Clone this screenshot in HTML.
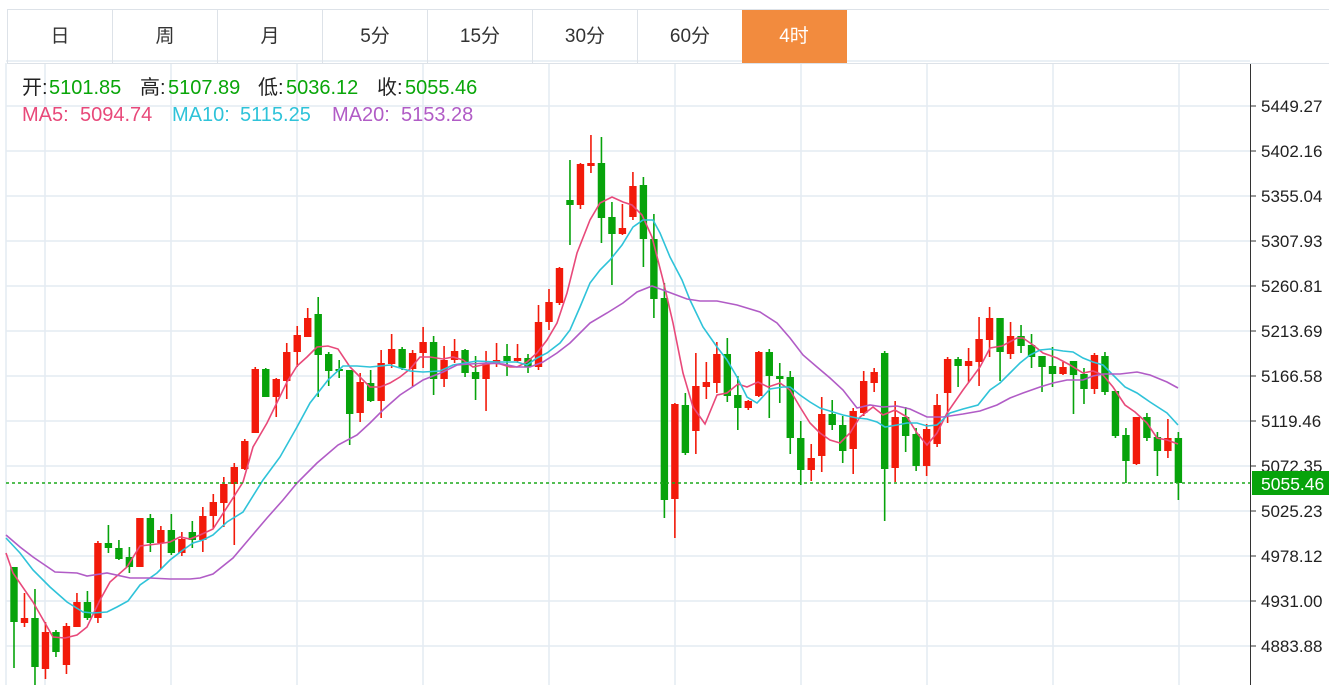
<!DOCTYPE html>
<html><head><meta charset="utf-8">
<style>
body{margin:0;width:1329px;height:685px;overflow:hidden;background:#fff;font-family:"Liberation Sans","Noto Sans CJK SC",sans-serif;position:relative}
.tabs{position:absolute;left:7px;top:9px;height:53px;width:1322px;border-top:1px solid #dde2e8;border-bottom:1px solid #dde2e8;border-left:1px solid #dde2e8}
.tab{position:absolute;top:0;height:53px;width:104px;border-right:1px solid #dde2e8;text-align:center;line-height:53px;font-size:19px;color:#333}
.tab.on{background:#f28b3e;color:#fff;border-color:#f28b3e}
.t{position:absolute;font-size:20px;white-space:nowrap;line-height:24px}
.g{color:#09a609}.k{color:#222}
svg{position:absolute;left:0;top:0}
</style></head><body>
<svg id="c" width="1329" height="685"></svg>
<div class="tabs">
<div class="tab" style="left:0">日</div><div class="tab" style="left:105px">周</div><div class="tab" style="left:210px">月</div><div class="tab" style="left:315px">5分</div><div class="tab" style="left:420px">15分</div><div class="tab" style="left:525px">30分</div><div class="tab" style="left:630px">60分</div><div class="tab on" style="left:734px">4时</div>
</div>
<div class="t k" style="left:22px;top:76px">开:</div><div class="t g" style="left:49px;top:76px">5101.85</div>
<div class="t k" style="left:140px;top:76px">高:</div><div class="t g" style="left:168px;top:76px">5107.89</div>
<div class="t k" style="left:258px;top:76px">低:</div><div class="t g" style="left:286px;top:76px">5036.12</div>
<div class="t k" style="left:377px;top:76px">收:</div><div class="t g" style="left:405px;top:76px">5055.46</div>
<div class="t" style="left:22px;top:103px;color:#e8497a">MA5:</div><div class="t" style="left:80px;top:103px;color:#e8497a">5094.74</div>
<div class="t" style="left:172px;top:103px;color:#2fc3d9">MA10:</div><div class="t" style="left:240px;top:103px;color:#2fc3d9">5115.25</div>
<div class="t" style="left:332px;top:103px;color:#b15cc6">MA20:</div><div class="t" style="left:401px;top:103px;color:#b15cc6">5153.28</div>
<script>
var s='';
var gy=[61,106,151,196,241,286,331,376,421,466,511,556,601,646];
gy.forEach(function(y){s+='<line x1="6" x2="1250" y1="'+y+'" y2="'+y+'" stroke="#e4ebf2" stroke-width="1.5"/>';});
[6,45,171,297,423,549,675,801,927,1053,1179].forEach(function(x){s+='<line x1="'+x+'" x2="'+x+'" y1="63" y2="685" stroke="#e4ebf2" stroke-width="1.5"/>';});
var d=[[0,567,622,567,668],[1,618,623,593,627],[0,618,667,589,685],[1,632,669,622,679],[0,632,652,630,657],[1,626,665,623,674],[1,602,627,593,627],[0,602,618,591,620],[1,543,618,541,623],[0,543,548,525,553],[0,548,559,540,560],[0,557,567,547,573],[1,518,567,518,567],[0,518,543,514,552],[1,530,543,526,569],[0,530,553,514,555],[1,539,553,532,556],[0,532,540,521,548],[1,516,540,507,552],[1,502,516,494,528],[1,484,503,477,527],[1,467,484,463,545],[1,441,469,439,470],[1,369,433,367,433],[0,369,397,368,397],[1,379,397,378,417],[1,352,381,343,399],[1,335,352,326,367],[1,318,337,308,337],[0,314,355,297,397],[0,354,371,352,386],[0,369,370,360,378],[0,370,414,370,445],[1,382,413,373,422],[0,383,401,370,402],[1,363,401,350,418],[1,349,364,334,368],[0,349,368,347,370],[1,353,369,350,387],[1,342,353,327,368],[0,342,379,336,395],[1,360,379,346,387],[1,351,360,339,363],[0,350,373,349,377],[0,372,379,356,400],[1,363,379,351,411],[1,360,363,343,367],[0,356,361,344,376],[1,358,361,344,363],[0,358,367,354,373],[1,322,367,305,370],[1,302,322,289,330],[1,268,303,267,305],[0,200,205,160,245],[1,164,205,163,209],[1,163,166,135,173],[0,163,218,137,243],[0,217,234,202,285],[1,228,234,204,235],[1,186,217,172,220],[0,185,239,177,267],[0,239,299,214,318],[0,298,500,283,518],[1,404,499,403,538],[0,405,453,393,455],[1,386,431,353,454],[1,382,387,362,399],[1,354,383,342,393],[0,354,396,338,402],[0,395,408,376,430],[1,401,408,400,410],[1,352,396,351,397],[0,352,376,349,418],[0,376,379,363,403],[0,377,438,371,454],[0,438,470,421,485],[1,458,470,444,481],[1,414,456,397,472],[0,414,425,400,430],[0,425,451,416,463],[1,411,449,408,474],[1,381,413,371,416],[1,372,383,368,392],[0,353,469,351,521],[1,417,468,401,482],[0,417,436,407,452],[0,434,466,428,471],[1,429,466,424,476],[1,405,444,394,447],[1,359,393,357,423],[0,359,366,357,387],[1,361,366,348,383],[1,339,362,317,386],[1,318,340,307,357],[0,318,352,318,381],[1,336,354,322,359],[0,336,346,325,353],[0,345,357,334,368],[0,356,367,356,392],[0,366,374,347,387],[1,367,374,362,375],[0,361,375,361,414],[0,374,389,368,404],[1,355,389,353,394],[0,356,392,352,395],[0,391,436,391,438],[0,435,461,428,483],[1,417,464,417,465],[0,417,438,413,441],[0,437,451,432,476],[1,438,451,419,458],[0,438,483,432,500]];
d.forEach(function(c,i){var x=14+i*10.49,col=c[0]?'#f21a0a':'#07a30b';
s+='<line x1="'+x+'" x2="'+x+'" y1="'+c[3]+'" y2="'+c[4]+'" stroke="'+col+'" stroke-width="1.6"/>';
var h=Math.max(c[2]-c[1],2);s+='<rect x="'+(x-3.7)+'" y="'+c[1]+'" width="7.4" height="'+h+'" fill="'+col+'"/>';});
function pl(p,col){s+='<polyline fill="none" stroke="'+col+'" stroke-width="1.6" points="'+p+'"/>';}
pl("6,553 13,573 33,602 53,637 65,638 77,635 87,627 100,600 110,582 127,567 140,546 157,544 170,542 180,537 190,539 200,535 213,529 233,498 243,482 253,447 267,423 287,382 297,366 307,357 317,347 328,346 338,349 350,367 360,377 370,387 380,387 390,383 400,377 410,369 420,357 430,357 443,359 453,357 463,360 473,367 487,364 497,363 510,367 517,367 527,362 537,353 547,340 557,323 567,293 577,253 590,220 600,203 612,197 623,202 632,205 642,215 652,237 663,280 673,323 683,373 693,407 705,424 717,395 727,393 738,384 747,387 758,382 768,387 780,383 790,390 800,407 810,423 820,433 830,440 840,443 850,433 860,417 873,407 883,415 895,410 907,417 917,433 927,445 937,433 947,413 963,390 980,367 990,348 1002,346 1017,338 1023,338 1033,345 1043,353 1057,358 1070,365 1083,373 1093,371 1103,375 1113,387 1125,405 1135,412 1147,423 1157,438 1167,440 1178,444","#e8497a");
pl("6,538 20,553 33,570 50,587 67,602 83,612 93,613 107,612 117,607 128,601 140,585 157,573 170,560 183,550 193,543 203,540 213,535 227,522 243,512 263,480 280,457 297,427 310,403 328,380 343,366 357,366 370,367 390,365 410,371 423,372 440,371 453,365 477,361 497,362 517,362 527,365 537,358 547,353 560,343 570,330 580,307 590,283 600,270 610,260 622,245 633,227 643,220 653,220 660,233 670,257 682,280 690,300 703,327 717,347 727,360 737,377 747,397 757,403 770,389 783,387 790,387 800,395 810,402 820,408 833,412 843,415 857,418 867,419 877,422 885,427 897,425 907,423 917,423 927,426 937,425 950,413 963,409 978,405 990,390 1000,383 1010,373 1020,363 1030,355 1040,350 1050,349 1063,351 1073,352 1083,358 1093,362 1103,365 1113,375 1125,387 1137,393 1150,402 1167,413 1178,425","#2fc3d9");
pl("6,535 20,547 33,557 55,572 77,573 87,576 107,573 130,578 150,578 170,579 190,579 200,578 213,574 233,558 250,538 267,518 283,500 297,483 317,463 338,445 357,435 370,423 383,410 400,395 423,380 443,372 457,365 470,364 487,363 503,364 517,367 530,367 543,362 557,353 570,343 590,323 607,313 623,303 637,292 652,286 663,290 687,299 700,301 717,301 737,305 760,312 777,323 790,338 803,355 817,367 830,378 843,390 857,408 870,405 883,407 897,406 910,409 927,417 943,417 963,414 980,411 997,405 1010,398 1023,393 1040,387 1053,383 1067,380 1083,380 1093,376 1103,374 1120,374 1137,372 1150,375 1167,382 1178,388","#b15cc6");
s+='<line x1="6" x2="1250" y1="483" y2="483" stroke="#1aa81a" stroke-width="1.5" stroke-dasharray="3,3"/>';
s+='<line x1="1250.5" x2="1250.5" y1="63" y2="685" stroke="#333" stroke-width="1"/>';
var lab=["5449.27","5402.16","5355.04","5307.93","5260.81","5213.69","5166.58","5119.46","5072.35","5025.23","4978.12","4931.00","4883.88","4836.77"];
lab.forEach(function(t,i){var y=106+i*45;s+='<line x1="1250" x2="1256" y1="'+y+'" y2="'+y+'" stroke="#333"/>';s+='<text x="1261" y="'+(y+6)+'" font-size="17" fill="#222" font-family="Liberation Sans,sans-serif">'+t+'</text>';});
s+='<rect x="1252" y="471" width="77" height="24" fill="#07a30b"/><text x="1261" y="490" font-size="17.5" fill="#fff" font-family="Liberation Sans,sans-serif">5055.46</text>';
document.getElementById('c').innerHTML=s;
</script>
</body></html>
